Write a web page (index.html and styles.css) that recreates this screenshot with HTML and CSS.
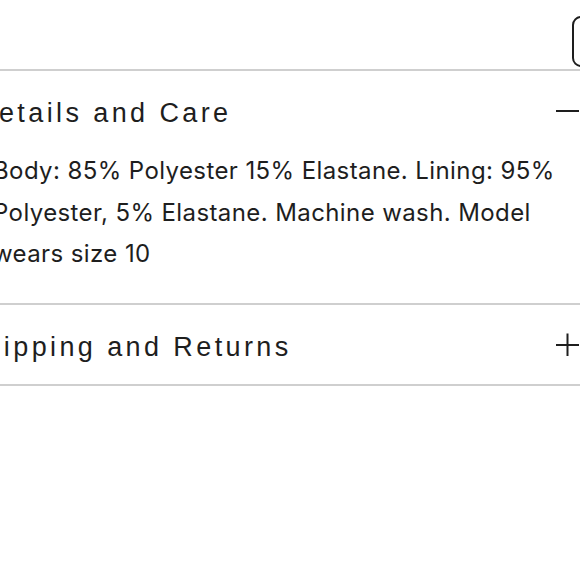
FILE: index.html
```html
<!DOCTYPE html>
<html lang="en">
<head>
<meta charset="utf-8">
<title>Product details</title>
<link rel="stylesheet" href="styles.css">
</head>
<body>
<div class="page">
  <div class="toolbar">
    <button class="size-btn" type="button">Size guide</button>
  </div>
  <section class="accordion">
    <div class="acc-item">
      <div class="acc-head">
        <h3 class="acc-title acc-title--details">Details and Care</h3>
        <svg class="acc-icon" width="24" height="24" viewBox="0 0 24 24"><path d="M0 12H23" stroke="#1e1e1e" stroke-width="2" fill="none"/></svg>
      </div>
      <p class="acc-body">Body: 85% Polyester 15% Elastane. Lining: 95% Polyester, 5% Elastane. Machine wash. Model wears size 10</p>
    </div>
    <div class="acc-item">
      <div class="acc-head">
        <h3 class="acc-title acc-title--shipping">Shipping and Returns</h3>
        <svg class="acc-icon" width="24" height="24" viewBox="0 0 24 24"><path d="M0 12H23M11.5 0.5V23" stroke="#1e1e1e" stroke-width="2" fill="none"/></svg>
      </div>
    </div>
  </section>
</div>
</body>
</html>
```
FILE: styles.css
```css
html, body {
  margin: 0;
  padding: 0;
  background: #ffffff;
  overflow: hidden;
}

body {
  font-family: "Liberation Sans", Arial, sans-serif;
  color: #1e1e1e;
}

.page {
  margin-left: -7px;
  width: 587px;
}

.toolbar {
  height: 69px;
  display: flex;
  justify-content: flex-end;
  align-items: flex-start;
}

.size-btn {
  margin-top: 16px;
  margin-right: -112px;
  width: 120px;
  height: 51px;
  border: 2px solid #1e1e1e;
  border-radius: 9px;
  background: #fff;
  font: 16px "Liberation Sans", Arial, sans-serif;
  color: #1e1e1e;
}

.acc-item {
  border-top: 2px solid #cfcfcf;
}

.acc-item:last-child {
  border-bottom: 2px solid #cfcfcf;
}

.acc-head {
  box-sizing: border-box;
  height: 79px;
  padding-top: 6px;
  display: flex;
  align-items: center;
  justify-content: space-between;
}

.acc-title {
  margin: 0;
  font-family: "Liberation Sans", Arial, sans-serif;
  font-size: 27px;
  font-weight: 400;
  letter-spacing: 3.4px;
}

.acc-title--details {
  margin-left: -17px;
}

.acc-title--shipping {
  margin-left: -29px;
}

.acc-icon {
  display: block;
  margin-bottom: 5px;
  flex: none;
}

.acc-body {
  margin: 0;
  padding-bottom: 28px;
  font-family: Inter, "Liberation Sans", Arial, sans-serif;
  font-size: 24px;
  line-height: 41.5px;
  letter-spacing: 0.4px;
}
```
